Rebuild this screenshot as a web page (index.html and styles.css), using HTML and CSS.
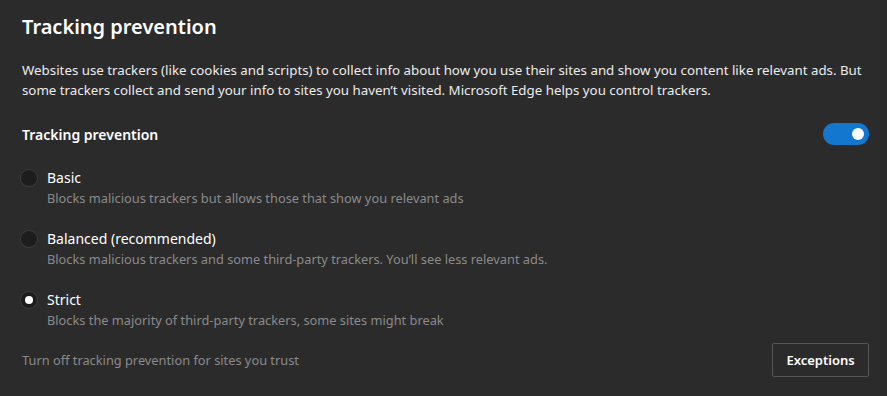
FILE: index.html
```html
<!DOCTYPE html>
<html>

<head>
  <title>Tracking prevention</title>
  <meta charset="utf-8">
  <link rel="stylesheet" href="styles.css">
</head>

<body>
  <div class="page">
    <h1 class="title">Tracking prevention</h1>
    <p class="intro">Websites use trackers (like cookies and scripts) to collect info about how you use their sites and show you content like relevant ads. But some trackers collect and send your info to sites you haven’t visited. Microsoft Edge helps you control trackers.</p>

    <div class="row">
      <span class="row-label">Tracking prevention</span>
      <span class="toggle"><span class="knob"></span></span>
    </div>

    <div class="option">
      <span class="radio"></span>
      <div>
        <div class="opt-name">Basic</div>
        <div class="opt-desc">Blocks malicious trackers but allows those that show you relevant ads</div>
      </div>
    </div>
    <div class="option">
      <span class="radio"></span>
      <div>
        <div class="opt-name">Balanced (recommended)</div>
        <div class="opt-desc">Blocks malicious trackers and some third-party trackers. You’ll see less relevant ads.</div>
      </div>
    </div>
    <div class="option">
      <span class="radio checked"></span>
      <div>
        <div class="opt-name">Strict</div>
        <div class="opt-desc">Blocks the majority of third-party trackers, some sites might break</div>
      </div>
    </div>

    <div class="footer">
      <span class="footer-text">Turn off tracking prevention for sites you trust</span>
      <button class="btn">Exceptions</button>
    </div>
  </div>
</body>

</html>
```

FILE: styles.css
```css
* {
  padding: 0;
  margin: 0;
  box-sizing: border-box;
}

html, body {
  background: #2b2b2b;
}

body {
  font-family: "Noto Sans", "Open Sans", sans-serif;
  color: #ffffff;
  font-size: 13px;
}

.page {
  padding: 12px 18px 0 22px;
}

.title {
  font-size: 20px;
  font-weight: 600;
  line-height: 30px;
}

.intro {
  margin-top: 18px;
  font-size: 13.3px;
  line-height: 20px;
  color: #ececec;
}

.row {
  display: flex;
  justify-content: space-between;
  align-items: center;
  margin-top: 23px;
}

.row-label {
  font-weight: 600;
  font-size: 14px;
}

.toggle {
  width: 46px;
  height: 22px;
  border-radius: 11px;
  background: #1376cf;
  display: flex;
  justify-content: flex-end;
  align-items: center;
  padding-right: 5px;
}

.knob {
  width: 12px;
  height: 12px;
  border-radius: 50%;
  background: #ffffff;
}

.option {
  display: flex;
  margin-top: 23px;
  margin-left: -2px;
}

.option + .option {
  margin-top: 21px;
}

.radio {
  width: 18px;
  height: 18px;
  border-radius: 50%;
  background: #1d1d1d;
  border: 1px solid #3c3c3c;
  margin-top: 1px;
  margin-right: 9px;
  display: flex;
  align-items: center;
  justify-content: center;
}

.radio.checked::after {
  content: "";
  width: 8px;
  height: 8px;
  border-radius: 50%;
  background: #ffffff;
}

.opt-name {
  font-size: 14px;
  line-height: 20px;
}

.opt-desc {
  color: #8a8a8a;
  font-size: 12.8px;
  line-height: 20px;
}

.footer {
  display: flex;
  justify-content: space-between;
  align-items: center;
  margin-top: 13px;
}

.footer-text {
  color: #8a8a8a;
  font-size: 12.8px;
}

.btn {
  font-family: inherit;
  font-size: 13px;
  font-weight: 600;
  color: #ffffff;
  background: #2b2b2b;
  border: 1px solid #555555;
  border-radius: 2px;
  width: 97px;
  height: 34px;
}
```
